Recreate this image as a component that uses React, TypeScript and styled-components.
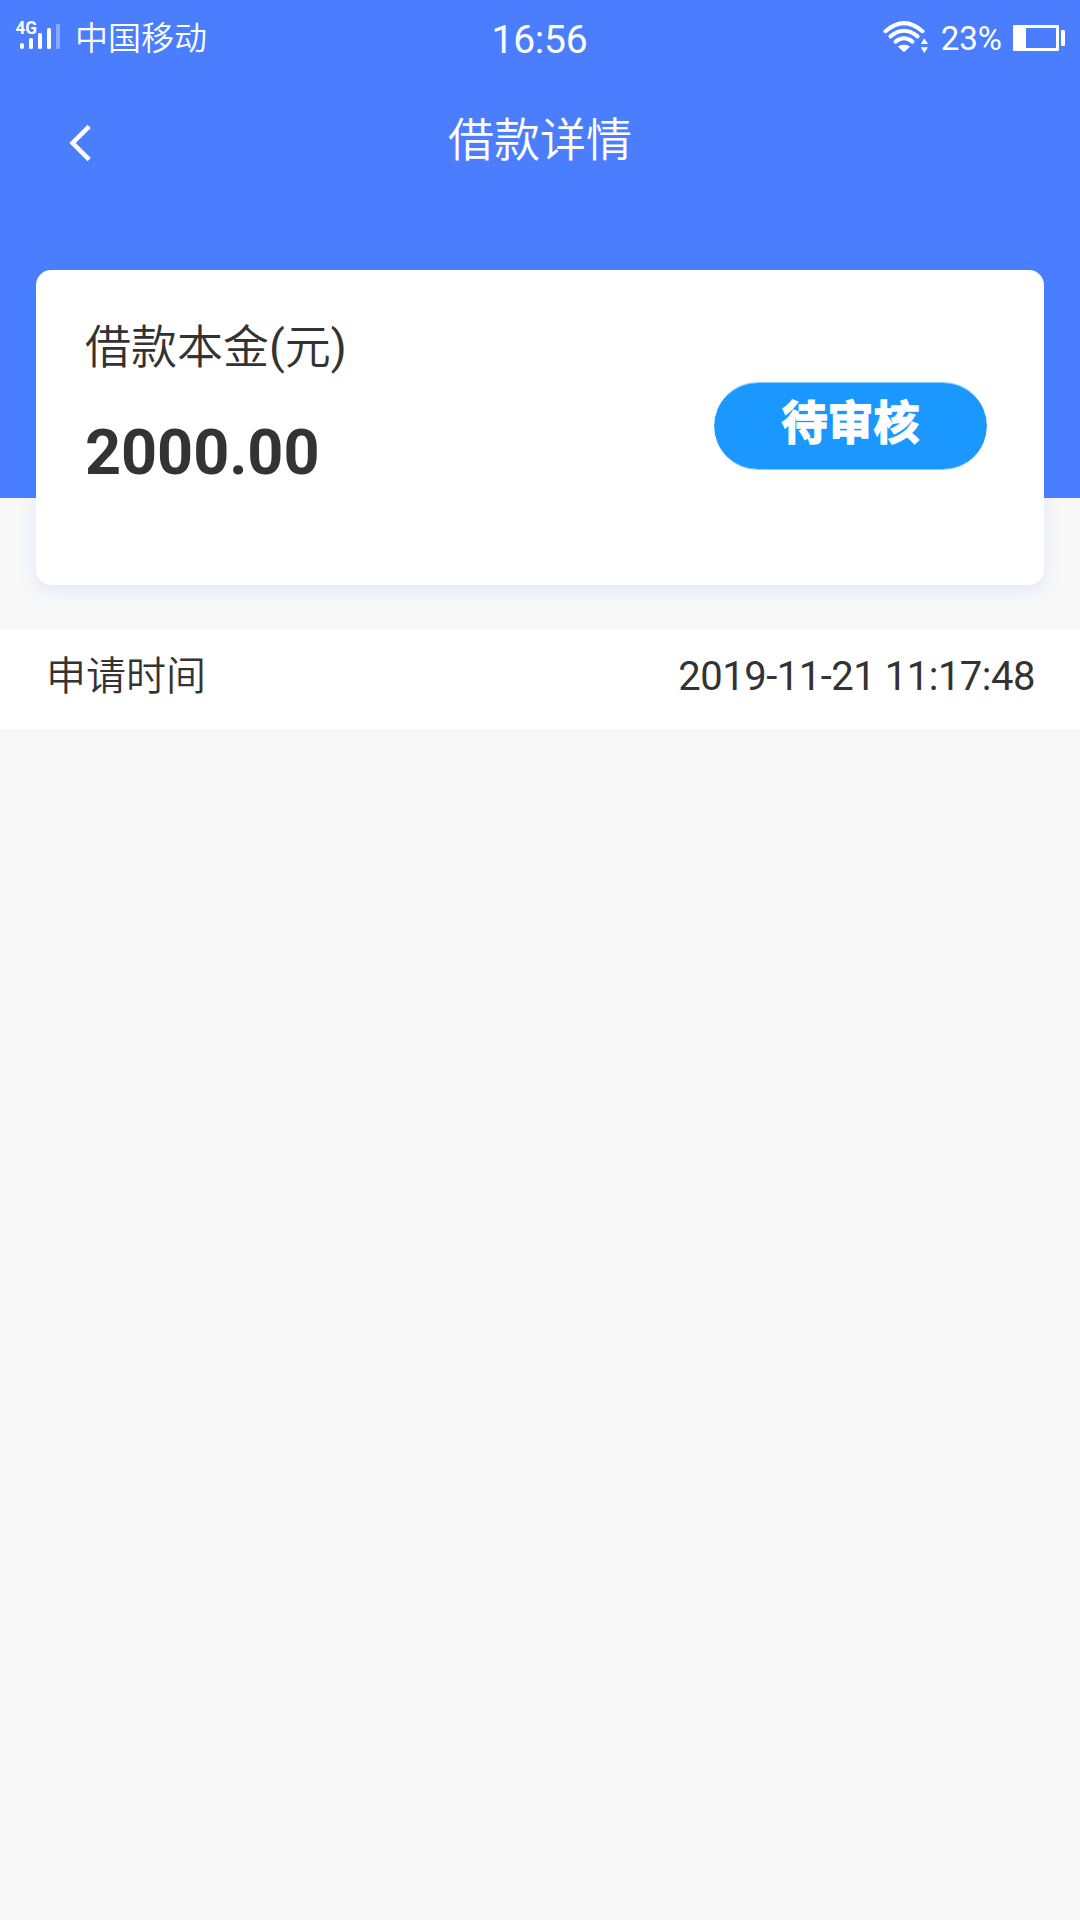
import React from "react";
import styled, { createGlobalStyle } from "styled-components";

const GlobalStyle = createGlobalStyle`
  * { box-sizing: border-box; }
  body {
    margin: 0;
    background: #f8f8f8;
    font-family: Roboto, "Noto Sans CJK SC", sans-serif;
    color: #333;
  }
`;

const Screen = styled.div`
  display: flex;
  flex-direction: column;
  min-height: 1920px;
  background: #f8f8f8;
`;

const Header = styled.header`
  display: flex;
  flex-direction: column;
  height: 498px;
  background: #4a7eff;
  color: #fff;
`;

const StatusBar = styled.div`
  display: grid;
  grid-template-columns: 1fr auto 1fr;
  align-items: center;
  height: 78px;
  padding: 0 14px;
  line-height: 48px;
`;

const StatusGroup = styled.div<{ $end?: boolean }>`
  display: flex;
  align-items: center;
  justify-content: ${(p) => (p.$end ? "flex-end" : "flex-start")};
  height: 78px;
`;

/* Chinese text is set in the light cut, Latin and digits in Roboto regular. */
const Han = styled.span`
  font-family: "Noto Sans CJK SC DemiLight", "Noto Sans CJK SC", sans-serif;
  font-weight: 300;
  line-height: 1;
`;

const Carrier = styled.span`
  margin-left: 14px;
  font-size: 33px;
`;

const Clock = styled.time`
  font-size: 39px;
  letter-spacing: -0.2px;
  padding: 2px 1px 0 0;
`;

const BatteryText = styled.span`
  margin: 0 11px 0 12px;
  font-size: 33px;
`;

const NavBar = styled.nav`
  display: grid;
  grid-template-columns: 140px 1fr 140px;
  height: 124px;
`;

const BackButton = styled.button`
  display: flex;
  align-items: center;
  padding: 6px 0 0 68px;
  margin: 0;
  border: 0;
  background: none;
  height: 124px;
`;

const Title = styled.h1`
  margin: 0;
  text-align: center;
  font-size: 46px;
  font-weight: 400;
  line-height: 124px;
`;

const Card = styled.section`
  display: flex;
  justify-content: space-between;
  height: 315px;
  margin: -228px 36px 0;
  padding: 47px 57px 0 49px;
  border-radius: 15px;
  background: #fff;
  box-shadow: 0 6px 18px rgba(74, 126, 255, 0.13);
`;

const Principal = styled.div`
  display: flex;
  flex-direction: column;
`;

const Label = styled.div`
  font-size: 46px;
  line-height: 60px;
`;

const Amount = styled.div`
  margin-top: 41px;
  font-size: 63px;
  font-weight: 700;
  letter-spacing: -0.1px;
  line-height: 70px;
`;

const StatusPill = styled.div`
  width: 273px;
  height: 88px;
  margin-top: 65px;
  border: 0 solid rgba(27, 152, 255, 0.5);
  border-width: 1px 0;
  border-radius: 44px;
  background: #1b98ff;
  background-clip: padding-box;
  color: #fff;
  text-align: center;
  font-size: 46px;
  font-weight: 700;
  line-height: 81px;
  -webkit-text-stroke: 1.4px #fff;
`;

const InfoRow = styled.div`
  display: flex;
  justify-content: space-between;
  height: 99px;
  margin-top: 45px;
  padding: 0 45px 0 46px;
  background: #fff;
  font-size: 40px;
  line-height: 94px;
`;

const InfoName = styled.div`
  height: 94px;
`;

const Timestamp = styled.time`
  letter-spacing: -0.5px;
`;

const SignalIcon = () => (
  <svg width="47" height="48" viewBox="14 15 47 48" fill="#fff">
    <text x="15.5" y="33.8" fontSize="18" fontWeight="700" fontFamily="Roboto, sans-serif" textLength="21.5" lengthAdjust="spacingAndGlyphs">4G</text>
    <rect x="20" y="43" width="4" height="6" rx="2" />
    <rect x="29" y="38" width="4" height="11" rx="1.6" />
    <rect x="38" y="33" width="4" height="16" rx="1.6" />
    <rect x="47" y="28" width="4" height="21" rx="1.6" />
    <rect x="56" y="24" width="4" height="25" rx="1" opacity=".35" />
  </svg>
);

const WifiIcon = () => (
  <svg width="46" height="38" viewBox="883 20 46 38" fill="none" stroke="#fff" strokeWidth="4" strokeLinecap="round">
    <path d="M885.5 31.2Q904 15 922.5 31.2" />
    <path d="M890.4 36.4Q904 25 917.6 36.4" />
    <path d="M895.5 41.6Q904 35 912.5 41.6" />
    <path d="M899 46.7Q904 44.5 909 46.7L904 51.2Z" fill="#fff" strokeWidth="1.5" strokeLinejoin="round" />
    <path d="M924.3 38.2L928 44H920.7Z M924.3 53L928 47.2H920.7Z" fill="#fff" stroke="none" />
  </svg>
);

const BatteryIcon = () => (
  <svg width="53" height="28" viewBox="1013 25 53 28" fill="#fff">
    <path
      fillRule="evenodd"
      d="M1014 25H1058Q1059 25 1059 26V50Q1059 51 1058 51H1014Q1013 51 1013 50V26Q1013 25 1014 25ZM1026 28V48H1056V28Z"
    />
    <rect x="1061" y="30" width="4" height="16" rx="1" />
  </svg>
);

const BackIcon = () => (
  <svg width="24" height="38" viewBox="68 124 24 38" fill="none" stroke="#fff" strokeWidth="4.6">
    <path d="M89.2 126.3L72.6 143L89.2 159.7" />
  </svg>
);

export default function App() {
  return (
    <>
      <GlobalStyle />
      <Screen>
        <Header>
          <StatusBar>
            <StatusGroup>
              <SignalIcon />
              <Carrier>
                <Han>中国移动</Han>
              </Carrier>
            </StatusGroup>
            <Clock>16:56</Clock>
            <StatusGroup $end>
              <WifiIcon />
              <BatteryText>23%</BatteryText>
              <BatteryIcon />
            </StatusGroup>
          </StatusBar>
          <NavBar>
            <BackButton aria-label="返回">
              <BackIcon />
            </BackButton>
            <Title>
              <Han>借款详情</Han>
            </Title>
          </NavBar>
        </Header>
        <Card>
          <Principal>
            <Label>
              <Han>借款本金</Han>(<Han>元</Han>)
            </Label>
            <Amount>2000.00</Amount>
          </Principal>
          <StatusPill>待审核</StatusPill>
        </Card>
        <InfoRow>
          <InfoName>
            <Han>申请时间</Han>
          </InfoName>
          <Timestamp>2019-11-21 11:17:48</Timestamp>
        </InfoRow>
      </Screen>
    </>
  );
}
